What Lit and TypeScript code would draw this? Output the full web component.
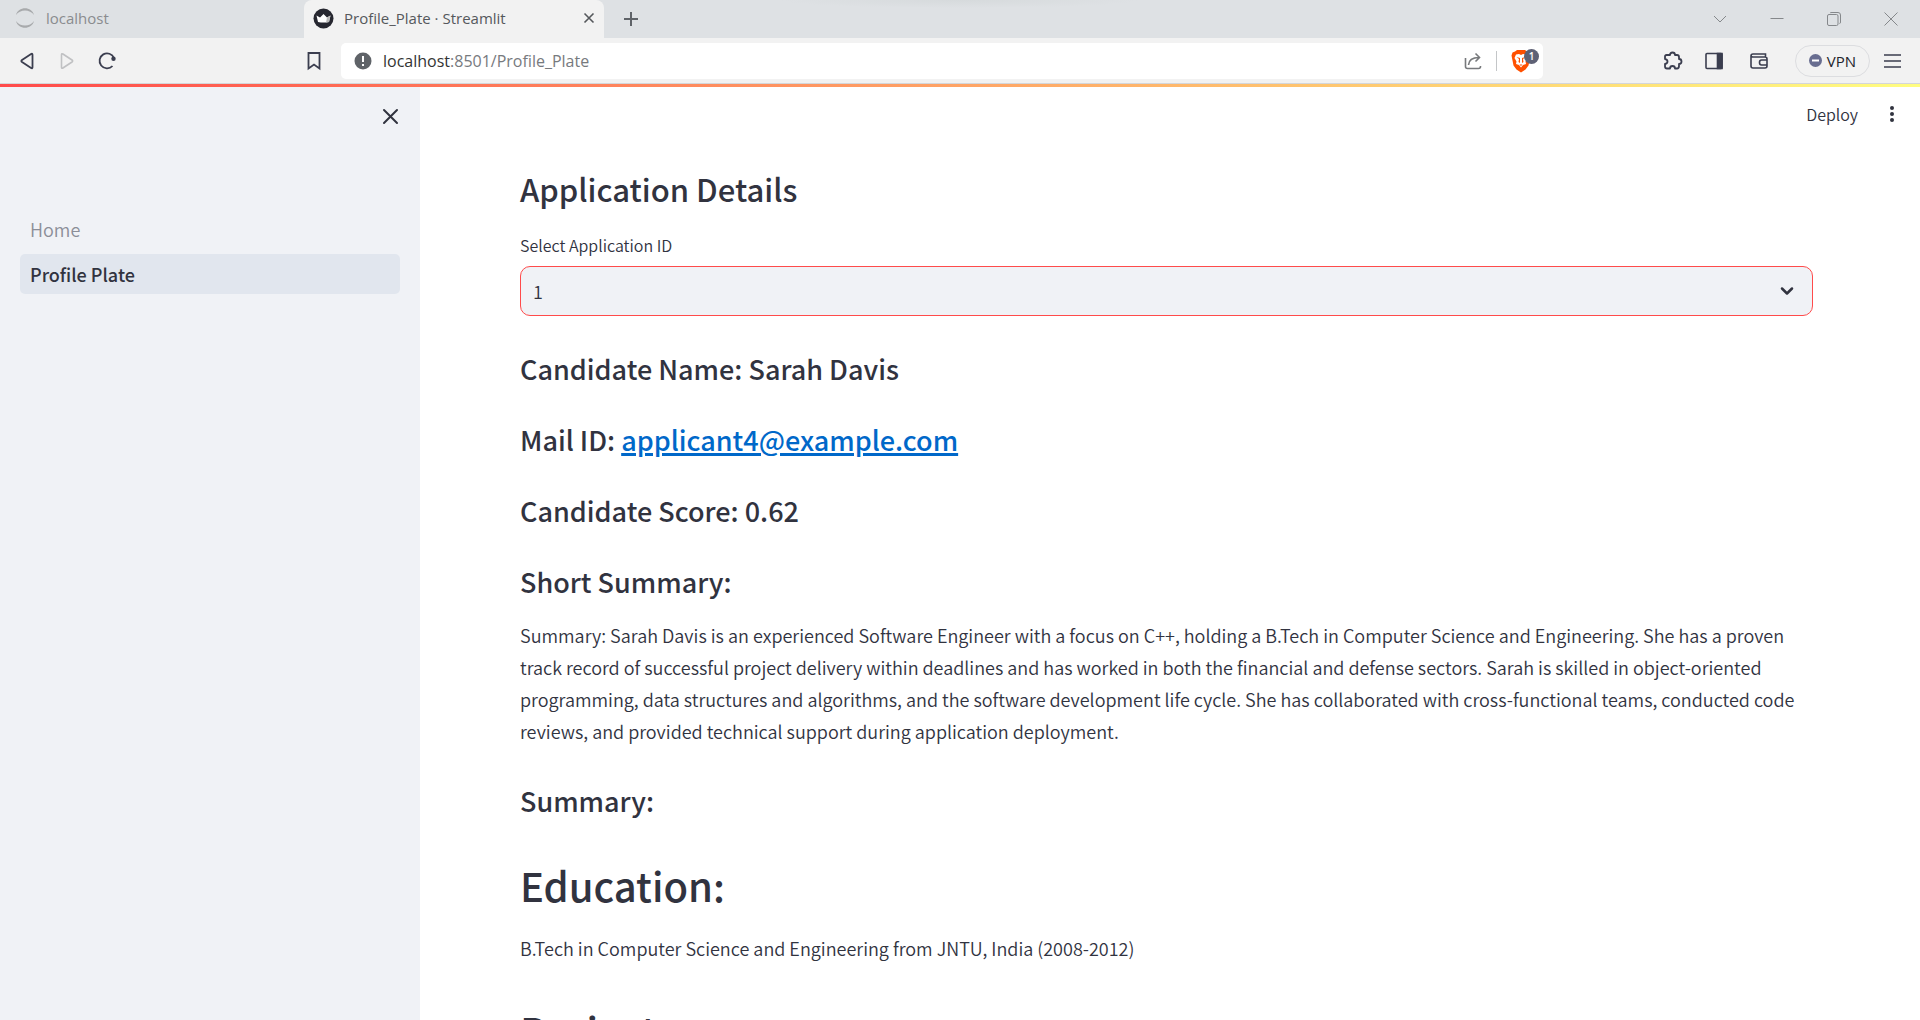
import { LitElement, html, css } from "lit";
import { customElement, state } from "lit/decorators.js";

const NARRATIVE =
  "Summary: Sarah Davis is an experienced Software Engineer with a focus on C++, holding a B.Tech in Computer Science and Engineering. She has a proven track record of successful project delivery within deadlines and has worked in both the financial and defense sectors. Sarah is skilled in object-oriented programming, data structures and algorithms, and the software development life cycle. She has collaborated with cross-functional teams, conducted code reviews, and provided technical support during application deployment.";

@customElement("browser-chrome")
class BrowserChrome extends LitElement {
  static styles = css`
    :host {
      display: block;
      font-family: "Open Sans", "Noto Sans", sans-serif;
      font-weight: 400;
      color: #5f6368;
    }
    svg {
      display: block;
      fill: none;
      stroke: currentColor;
    }
    svg.solid {
      stroke: none;
    }
    button {
      appearance: none;
      border: 0;
      padding: 0;
      background: none;
      color: inherit;
      font: inherit;
      display: flex;
      align-items: center;
      justify-content: center;
    }
    .tabs {
      display: flex;
      height: 38px;
      background: radial-gradient(180px 8px at 50% 0, #d6dadc, transparent) #dee1e4;
      font-size: 15px;
      line-height: 20px;
    }
    .tab {
      display: flex;
      align-items: center;
      gap: 10px;
      width: 304px;
      box-sizing: border-box;
      padding: 0 0 2px 14px;
      color: #8a8c8f;
    }
    .tab.active {
      width: 300px;
      padding: 0 9px 2px;
      background: #f2f2f2;
      color: #55585c;
      border-radius: 8px 8px 0 0;
    }
    .title {
      flex: 1;
    }
    .new {
      width: 54px;
    }
    .window {
      display: flex;
      margin-left: auto;
      padding-right: 1px;
      color: #85888b;
    }
    .window button {
      width: 57px;
    }
    .bar {
      display: flex;
      align-items: center;
      height: 45px;
      background: #f2f2f2;
      border-bottom: 1px solid #d4d6d9;
      color: #3b3e4f;
    }
    .nav {
      display: flex;
      gap: 20px;
      padding: 0 18px 0 17px;
      width: 341px;
      box-sizing: border-box;
    }
    .mark {
      margin-left: auto;
    }
    .off {
      color: #c0c1c3;
    }
    .address {
      display: flex;
      align-items: center;
      flex: 1;
      height: 36px;
      box-sizing: border-box;
      background: #fff;
      border-radius: 5px;
      padding: 0 4px 0 13px;
      font-size: 16px;
      color: #777a7e;
    }
    .url {
      flex: 1;
      padding-left: 11px;
    }
    .host {
      color: #333;
    }
    .share {
      color: #77797c;
    }
    .rule {
      width: 1px;
      height: 20px;
      background: #c4c6c8;
      margin: 0 14px;
    }
    .extras {
      display: flex;
      align-items: center;
      justify-content: flex-end;
      width: 377px;
      box-sizing: border-box;
      gap: 27px;
      padding-right: 18px;
    }
    .vpn {
      border: 1px solid #dcdde0;
      border-radius: 16px;
      height: 32px;
      width: 75px;
      gap: 5px;
      font-size: 15px;
      color: #22242c;
    }
    .pair {
      display: flex;
      gap: 22px;
      align-items: center;
    }
    .pair.tight {
      gap: 14px;
    }
  `;

  render() {
    return html`
      <div class="tabs">
        <div class="tab">
          <svg class="solid" width="22" height="22" viewBox="0 0 22 22"><path d="M2 8C4 -1 18 -1 20 8C16 2 6 2 2 8zM2 14C4 23 18 23 20 14C16 20 6 20 2 14z" fill="#a8aaac" /></svg>
          <span class="title">localhost</span>
        </div>
        <div class="tab active">
          <svg class="solid" width="21" height="21" viewBox="0 0 21 21"><circle cx="10.500" cy="10.500" r="10" fill="#262730" /><path d="M3.500 7.500l3.500 2 3.500-3.500 3.500 3.500 3.500-2L16 14q-5.500 1-11 0z" fill="#fff" /><path d="M14 9.500l3.500-2L16 14q-1 .3-3 .4z" fill="#bbb" /></svg>
          <span class="title">Profile_Plate · Streamlit</span>
          <button aria-label="Close tab"><svg width="12" height="12" viewBox="0 0 12 12" stroke-width="1.600"><path d="M1.500 1.500l9 9M10.500 1.500l-9 9" /></svg></button>
        </div>
        <button class="new" aria-label="New tab"><svg width="16" height="16" viewBox="0 0 16 16" stroke-width="2"><path d="M8 1v14M1 8h14" /></svg></button>
        <div class="window">
          <button aria-label="Search tabs"><svg width="14" height="14" viewBox="0 0 14 14"><path d="M1 4l6 6 6-6" /></svg></button>
          <button aria-label="Minimize"><svg width="14" height="14" viewBox="0 0 14 14"><path d="M.5 6.500h13" /></svg></button>
          <button aria-label="Restore"><svg width="14" height="14" viewBox="0 0 14 14"><rect x=".5" y="2.500" width="10.500" height="11" rx="1.500" /><path d="M3 1Q3 .5 5 .5h6Q13.500.5 13.500 3v7q0 1.500-1 1.500" /></svg></button>
          <button aria-label="Close"><svg width="14" height="14" viewBox="0 0 14 14"><path d="M.5.5l13 13M13.500.5l-13 13" /></svg></button>
        </div>
      </div>
      <div class="bar">
        <div class="nav">
          <button aria-label="Back"><svg width="20" height="20" viewBox="0 0 20 20" stroke-width="1.800" stroke-linejoin="round"><path d="M15.500 3.800v12.400q0 1.600-1.400.8L5 11q-1.300-1 0-2l9.100-6q1.400-.8 1.400.8z" /></svg></button>
          <button class="off" aria-label="Forward"><svg width="20" height="20" viewBox="0 0 20 20" stroke-width="1.600" stroke-linejoin="round"><path d="M4.500 3.800v12.400q0 1.600 1.400.8l9.100-6q1.300-1 0-2L5.900 3q-1.400-.8-1.400.8z" /></svg></button>
          <button aria-label="Reload"><svg width="20" height="20" viewBox="0 0 20 20" stroke-width="1.800"><path d="M15.500 15A7.500 7.500 0 1 1 17 7" /><circle cx="16.500" cy="7.800" r="2.200" fill="currentColor" stroke="none" /></svg></button>
          <button class="mark" aria-label="Bookmark"><svg width="18" height="20" viewBox="0 0 18 20" stroke-width="1.800"><path d="M3.500 2h11v15.500L9 13.500l-5.500 4z" /></svg></button>
        </div>
        <div class="address">
          <svg class="solid" width="18" height="18" viewBox="0 0 18 18"><circle cx="9" cy="9" r="8.500" fill="#5f6368" /><path d="M8 4h2v6H8zM8 12h2v2H8z" fill="#fff" /></svg>
          <span class="url"><span class="host">localhost</span>:8501/Profile_Plate</span>
          <button class="share" aria-label="Share"><svg width="18" height="18" viewBox="0 0 18 18" stroke-width="1.600"><path d="M1.500 6v8.500q0 2 2 2h11q2 0 2-2V14M4.500 13Q5 5.500 15 5.500M11.500 1.500l4 4-4 4" /></svg></button>
          <span class="rule"></span>
          <button aria-label="Brave Shields">
            <svg class="solid" width="28" height="24" viewBox="0 0 28 24"><path d="M6 1h8l2 1.500 2.500 1 1 3-2 10-3 4-4.500 3-4.500-3-3-4-2-10 1-3L4 2.500z" fill="#ff5000" /><path d="M5 5.500l3-.5 2 1 2-1 3 .5L16.500 9l-2 3.500.5 2.500-3 1-2 2.500L8 16l-3-1 .5-2.500L3.500 9z" fill="#fff" /><path d="M5.500 8l3.500 1v5L7.500 13 8 10zM14.500 8L11 9v5l1.500-1-.5-3zM8.500 15.500h3L10 17z" fill="#ff5000" /><circle cx="20.500" cy="7.500" r="7.500" fill="#5e6175" /><text x="20.500" y="11" text-anchor="middle" font-size="10" font-weight="600" fill="#fff">1</text></svg>
          </button>
        </div>
        <div class="extras">
          <div class="pair">
            <button aria-label="Extensions"><svg width="20" height="20" viewBox="0 0 20 20" stroke-width="1.800" stroke-linejoin="round"><path d="M3.500 4H7Q7 1.500 9.500 1.500T12 4h2q2 0 2 2v2q2.500 0 2.500 2.500T16 13v2q0 2.500-2 2.500h-2Q12 15 9.500 15T7 17.500H4Q2 17.500 2 15.500V13q2.500-.5 2.500-2.500T2 8V5.500Q2 4 3.500 4z" /></svg></button>
            <button aria-label="Sidebar"><svg width="18" height="18" viewBox="0 0 18 18" stroke-width="1.600"><rect x="1" y="1.500" width="16" height="15" rx="1" /><path d="M12.500 1.500H17v15h-4.500z" fill="currentColor" /></svg></button>
          </div>
          <button aria-label="Wallet"><svg width="18" height="18" viewBox="0 0 18 18" stroke-width="1.600"><path d="M15.500 5V2H3Q1 2 1 4v10q0 2 2 2h12q2 0 2-2V7q0-2-2-2H3Q1 5 1 3.500M17 8h-5.500q-2 0-2 2.500t2 2.500H17" /></svg></button>
          <div class="pair tight">
            <button class="vpn"><svg class="solid" width="13" height="13" viewBox="0 0 13 13"><circle cx="6.500" cy="6.500" r="6.500" fill="#686d90" /><path d="M3 5.500h7v2H3z" fill="#fff" /></svg>VPN</button>
            <button aria-label="Menu"><svg width="18" height="18" viewBox="0 0 18 18" stroke-width="1.600"><path d="M0 3h17M0 9h17M0 15h17" /></svg></button>
          </div>
        </div>
      </div>
    `;
  }
}

@customElement("app-root")
class AppRoot extends LitElement {
  @state() private selected = "1";

  static styles = css`
    :host {
      display: flex;
      flex-direction: column;
      height: 100vh;
      overflow: hidden;
      background: #fff;
      color: #31333f;
      font-family: "Noto Sans CJK SC", sans-serif;
      font-size: 18px;
      font-weight: 350;
      line-height: 32px;
    }
    svg {
      display: block;
      fill: none;
      stroke: currentColor;
    }
    svg.solid {
      fill: currentColor;
      stroke: none;
    }
    button {
      appearance: none;
      border: 0;
      padding: 0;
      background: none;
      color: inherit;
      font: inherit;
    }
    .decoration {
      height: 3px;
      flex: none;
      background: linear-gradient(90deg, #ff4b4b, #fffd80);
    }
    .page {
      display: flex;
      flex: 1;
      min-height: 0;
    }
    .sidebar {
      width: 420px;
      flex: none;
      box-sizing: border-box;
      background: #f0f2f6;
      padding: 20px;
    }
    .close {
      display: block;
      margin: 0 0 83px auto;
    }
    .links {
      display: flex;
      flex-direction: column;
      gap: 5px;
    }
    .link {
      height: 40px;
      line-height: 40px;
      padding: 0 10px;
      border-radius: 5px;
      color: #8b8e98;
      text-decoration: none;
    }
    .link.current {
      background: #e1e6ee;
      color: #31333f;
      font-weight: 500;
    }
    main {
      flex: 1;
      min-width: 0;
      overflow: hidden;
    }
    .actions {
      display: flex;
      justify-content: flex-end;
      align-items: center;
      gap: 26px;
      height: 53px;
      padding-right: 20px;
      font-size: 16px;
    }
    .content {
      padding: 25px 107px 0 100px;
    }
    h1,
    h2,
    h3,
    p {
      margin: 0;
    }
    h1,
    h2,
    h3 {
      font-weight: 500;
    }
    h2 {
      font-size: 31px;
      line-height: 48px;
    }
    h3 {
      font-size: 27px;
      line-height: 36px;
      padding-top: 35px;
    }
    h1 {
      font-size: 40px;
      line-height: 48px;
      padding: 42px 0 23px;
    }
    label {
      display: block;
      font-size: 16px;
      line-height: 24px;
      padding: 20px 0 9px;
    }
    .field {
      display: grid;
      align-items: center;
    }
    select,
    .chevron {
      grid-area: 1 / 1;
    }
    select {
      appearance: none;
      height: 50px;
      border: 1px solid #ff4b4b;
      border-radius: 10px;
      background: #f0f2f6;
      color: inherit;
      font: inherit;
      padding: 0 12px;
    }
    .chevron {
      justify-self: end;
      margin-right: 19px;
      pointer-events: none;
    }
    .mail {
      color: #0068c9;
      text-decoration-thickness: 3px;
    }
    .lead {
      padding: 19px 0 1px;
    }
  `;

  render() {
    return html`
      <browser-chrome></browser-chrome>
      <div class="decoration"></div>
      <div class="page">
        <aside class="sidebar">
          <button class="close" aria-label="Close sidebar">
            <svg width="19" height="19" viewBox="0 0 19 19" stroke-width="2" stroke-linecap="round"><path d="M3 3l13 13M16 3L3 16" /></svg>
          </button>
          <nav class="links">
            <a class="link" href="#home">Home</a>
            <a class="link current" href="#profile">Profile Plate</a>
          </nav>
        </aside>
        <main>
          <div class="actions">
            <button>Deploy</button>
            <button aria-label="Main menu">
              <svg class="solid" width="16" height="18" viewBox="0 0 16 18"><circle cx="8" cy="3" r="2" /><circle cx="8" cy="9" r="2" /><circle cx="8" cy="15" r="2" /></svg>
            </button>
          </div>
          <div class="content">
            <h2>Application Details</h2>
            <label for="application">Select Application ID</label>
            <div class="field">
              <select id="application" .value=${this.selected} @change=${(e: Event) => (this.selected = (e.target as HTMLSelectElement).value)}>
                <option>1</option>
              </select>
              <svg class="chevron" width="14" height="14" viewBox="0 0 14 14" stroke-width="2.500" stroke-linecap="round" stroke-linejoin="round"><path d="M2 4.500l5 5 5-5" /></svg>
            </div>
            <h3>Candidate Name: Sarah Davis</h3>
            <h3>Mail ID: <a class="mail" href="mailto:applicant4@example.com">applicant4@example.com</a></h3>
            <h3>Candidate Score: 0.62</h3>
            <h3>Short Summary:</h3>
            <p class="lead">${NARRATIVE}</p>
            <h3>Summary:</h3>
            <h1>Education:</h1>
            <p>B.Tech in Computer Science and Engineering from JNTU, India (2008-2012)</p>
            <h1>Projects:</h1>
          </div>
        </main>
      </div>
    `;
  }
}
